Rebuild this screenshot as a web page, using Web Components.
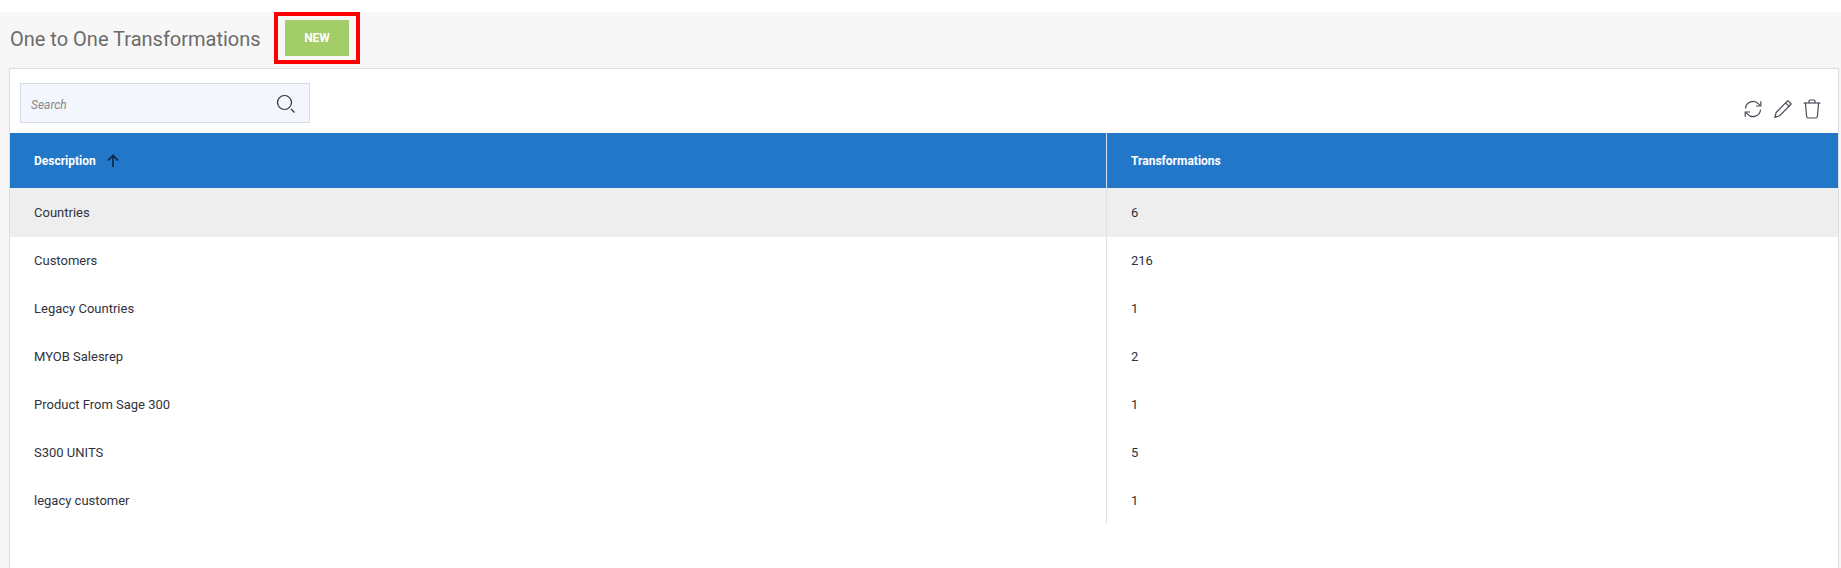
<!DOCTYPE html>
<html>
<head>
<meta charset="utf-8">
<title>One to One Transformations</title>
<style>
  html, body { margin: 0; height: 100%; background: #fff; overflow: hidden; }
  body { font-family: Roboto, "Liberation Sans", sans-serif; }
</style>
</head>
<body>
<transform-page>
  <page-header title="One to One Transformations"></page-header>
  <data-panel></data-panel>
</transform-page>

<script>
class TransformPage extends HTMLElement {
  connectedCallback() {
    this.attachShadow({ mode: "open" });
    this.shadowRoot.innerHTML = `
      <style>
        :host {
          display: flex;
          flex-direction: column;
          height: 556px;
          margin-top: 12px;
          padding: 0 2px 0 9px;
          background: #f7f7f7;
          box-sizing: border-box;
        }
      </style>
      <slot></slot>
    `;
  }
}

class PageHeader extends HTMLElement {
  connectedCallback() {
    this.attachShadow({ mode: "open" });
    this.shadowRoot.innerHTML = `
      <style>
        :host {
          display: flex;
          align-items: center;
          height: 56px;
          flex: none;
        }
        h1 {
          margin: 0 0 2px 1px;
          font-size: 20px;
          font-weight: 400;
          color: #6b6b6b;
          width: 264px;
          white-space: nowrap;
        }
        .mark {
          border: 4px solid #f00;
          padding: 4px 7px;
          margin-top: -4px;
          display: flex;
        }
        button {
          width: 64px;
          height: 36px;
          border: 0;
          padding: 0;
          background: #a2cd69;
          color: #fff;
          font: 700 12px Roboto, "Liberation Sans", sans-serif;
        }
      </style>
      <h1>${this.getAttribute("title")}</h1>
      <div class="mark"><button>NEW</button></div>
    `;
  }
}

class SearchBox extends HTMLElement {
  connectedCallback() {
    this.attachShadow({ mode: "open" });
    this.shadowRoot.innerHTML = `
      <style>
        :host {
          display: flex;
          align-items: center;
          justify-content: space-between;
          width: 290px;
          height: 40px;
          box-sizing: border-box;
          padding: 0 13px 0 10px;
          background: #f3f7fd;
          border: 1px solid #d5dce6;
        }
        span {
          margin-top: 4px;
          font-size: 12px;
          font-style: italic;
          color: #85878a;
        }
        svg { display: block; margin-top: 2px; }
      </style>
      <span>Search</span>
      <svg width="20" height="20" viewBox="0 0 20 20" fill="none" stroke="#2b3040">
        <circle cx="8.5" cy="8.5" r="7" stroke-width="1.2"/>
        <path d="M15 15l3.5 3.5" stroke-width="1.3"/>
      </svg>
    `;
  }
}

class ToolIcons extends HTMLElement {
  connectedCallback() {
    this.attachShadow({ mode: "open" });
    this.shadowRoot.innerHTML = `
      <style>
        :host {
          display: flex;
          gap: 10px;
          align-items: center;
          color: #454a57;
        }
        svg { display: block; }
      </style>
      <svg width="20" height="20" viewBox="0 0 20 20" fill="none" stroke="currentColor" stroke-width="1.2">
        <path d="M2.5 9.5A7.5 7.5 0 0 1 15.5 4.8L17.2 6.6"/>
        <path d="M17.8 2.2v4.8h-4.8" />
        <path d="M17.5 10.5A7.5 7.5 0 0 1 4.5 15.2L2.8 13.4"/>
        <path d="M2.2 17.8v-4.8h4.8"/>
      </svg>
      <svg width="20" height="20" viewBox="0 0 20 20" fill="none" stroke="currentColor" stroke-width="1.2" stroke-linejoin="round">
        <path d="M14.8 1.6l3.4 3.4L6.5 16.8 1.8 18.4l1.4-4.9z"/>
        <path d="M12.6 3.9l3.4 3.4"/>
      </svg>
      <svg width="18" height="20" viewBox="0 0 18 20" fill="none" stroke="currentColor" stroke-width="1.2">
        <path d="M0.5 4h17"/>
        <path d="M6 4V2.2Q6 1 7.2 1h3.6Q12 1 12 2.2V4"/>
        <path d="M2.4 4l1.2 13.2Q3.8 19 5.5 19h7q1.7 0 1.9-1.8L15.6 4"/>
      </svg>
    `;
  }
}

class DataPanel extends HTMLElement {
  connectedCallback() {
    this.attachShadow({ mode: "open" });
    this.shadowRoot.innerHTML = `
      <style>
        :host {
          display: flex;
          flex-direction: column;
          flex: 1;
          background: #fff;
          border: 1px solid #d8dee6;
          border-bottom: 0;
        }
        .toolbar {
          display: flex;
          justify-content: space-between;
          align-items: flex-start;
          height: 64px;
          box-sizing: border-box;
          padding: 14px 17px 0 10px;
          flex: none;
        }
        tool-icons { margin-top: 16px; }
      </style>
      <div class="toolbar">
        <search-box></search-box>
        <tool-icons></tool-icons>
      </div>
      <data-table></data-table>
    `;
  }
}

class DataTable extends HTMLElement {
  connectedCallback() {
    const rows = [
      ["Countries", "6"],
      ["Customers", "216"],
      ["Legacy Countries", "1"],
      ["MYOB Salesrep", "2"],
      ["Product From Sage 300", "1"],
      ["S300 UNITS", "5"],
      ["legacy customer", "1"],
    ];
    this.attachShadow({ mode: "open" });
    this.shadowRoot.innerHTML = `
      <style>
        :host {
          display: grid;
          grid-template-columns: 1097px 1fr;
          grid-template-rows: 55px;
          grid-auto-rows: 48px;
          font-size: 13px;
          color: #2f3340;
        }
        .cell {
          display: flex;
          align-items: center;
          padding-left: 24px;
        }
        .left { border-right: 1px solid #dde3ea; }
        .head {
          background: #2277c9;
          color: #fff;
          font-size: 12px;
          font-weight: 700;
        }
        .head.left { border-right-color: #d9e6f2; }
        .selected { background: #eeeeee; box-shadow: 0 1px 0 #eeeeee; }
        svg { margin-left: 11px; }
      </style>
      <div class="cell head left">Description
        <svg width="12" height="13" viewBox="0 0 12 13" fill="none" stroke="#14233c" stroke-width="1.6">
          <path d="M6 13V1.5M1 6.5l5-5 5 5"/>
        </svg>
      </div>
      <div class="cell head">Transformations</div>
      ${rows.map((r, i) => `
        <div class="cell left ${i === 0 ? "selected" : ""}">${r[0]}</div>
        <div class="cell ${i === 0 ? "selected" : ""}">${r[1]}</div>
      `).join("")}
    `;
  }
}

customElements.define("transform-page", TransformPage);
customElements.define("page-header", PageHeader);
customElements.define("search-box", SearchBox);
customElements.define("tool-icons", ToolIcons);
customElements.define("data-panel", DataPanel);
customElements.define("data-table", DataTable);
</script>
</body>
</html>
